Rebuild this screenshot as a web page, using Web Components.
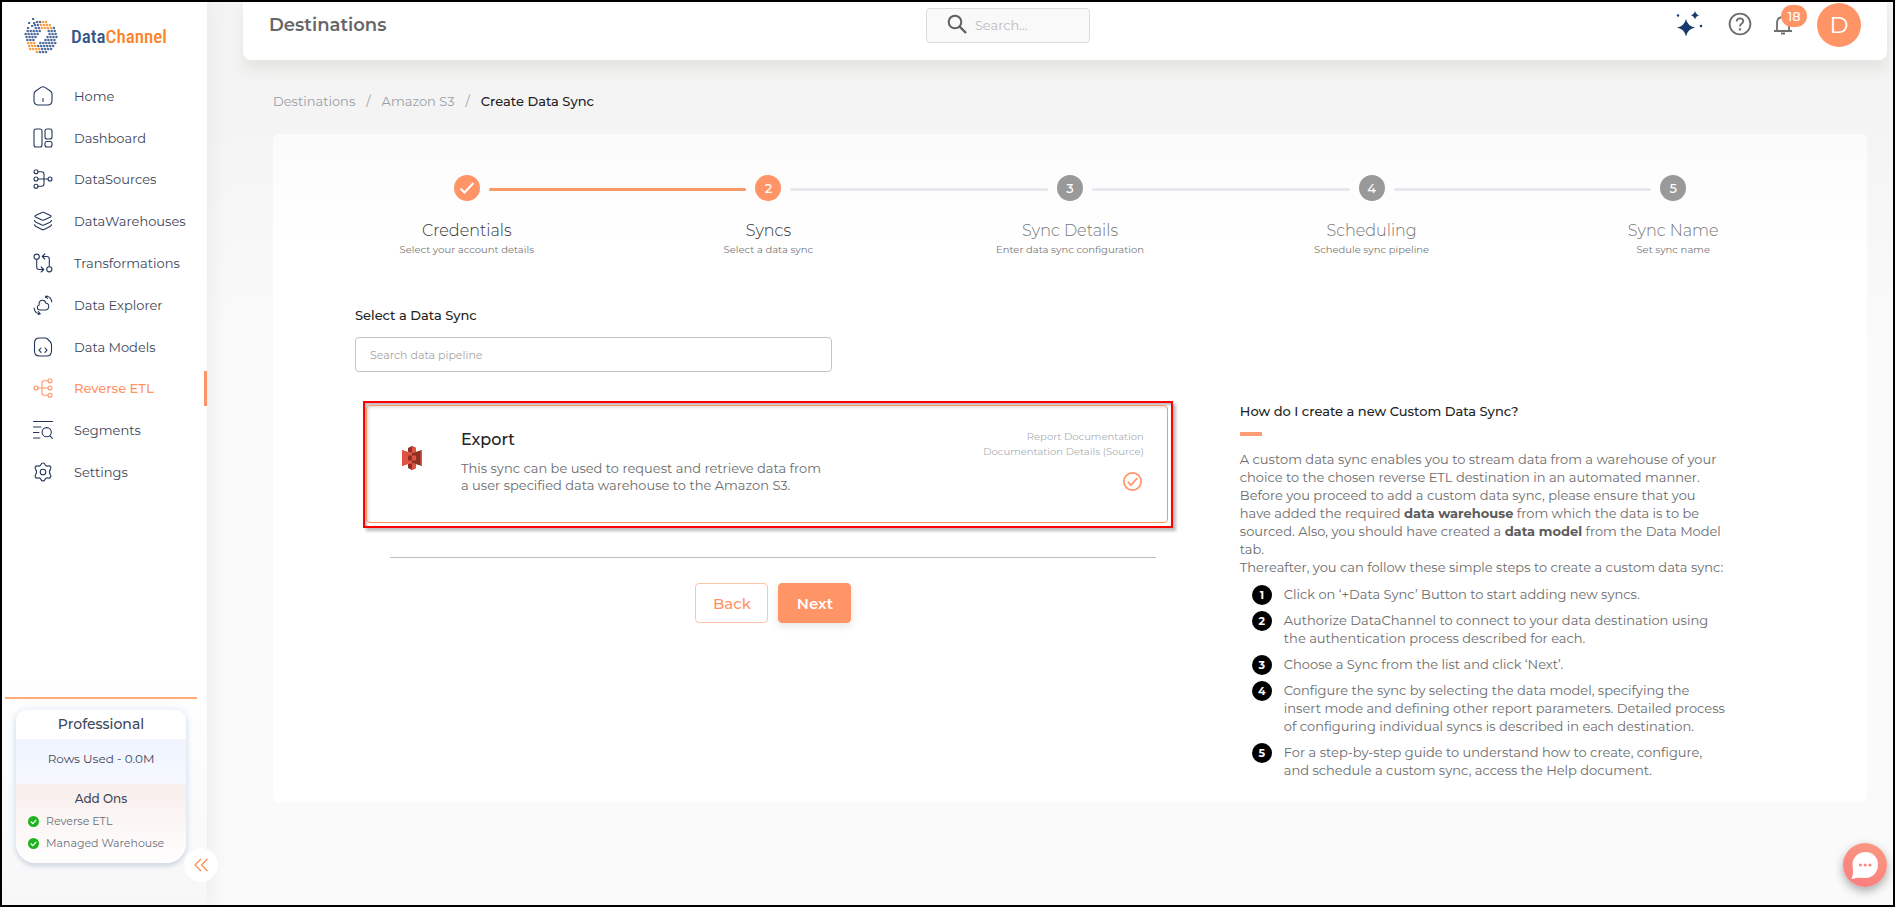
<!DOCTYPE html>
<html lang="en">
<head>
<meta charset="utf-8">
<title>Destinations - DataChannel</title>
<style>
  html { height: 100%; }
  body { margin: 0; min-height: 100%; box-sizing: border-box; border: 2px solid #000; display: flex;
    font-family: Montserrat, Inter, sans-serif; font-size: 13px; background: #fafafa; color: #666; }
  dc-app { flex: 1; }
</style>
</head>
<body>
<dc-app></dc-app>
<script>
const define = (name, html, setup) => customElements.define(name, class extends HTMLElement {
  constructor() {
    super();
    const t = document.createElement('template');
    t.innerHTML = '<style>*{box-sizing:border-box}a{color:inherit;text-decoration:none}button,input{font:inherit}svg{flex:none}</style>' + html;
    this.attachShadow({ mode: 'open' }).append(t.content.cloneNode(true));
  }
  connectedCallback() { if (setup) setup(this, this.shadowRoot); }
});

/* Line icons on a 20 x 20 grid */
const ICONS = {
  home: '<path d="M1 8.2Q1 6.200 2.700 5L8 1.400Q10 .2 12 1.400L17.300 5Q19 6.200 19 8.200V14.500Q19 19 14.500 19H5.500Q1 19 1 14.500ZM10 12.500V15.500"/>',
  dashboard: '<rect x="1" y="1" width="8" height="18" rx="2"/><rect x="12" y="1" width="7" height="10" rx="2"/><rect x="12" y="13.500" width="7" height="5.500" rx="2"/>',
  sources: '<circle cx="3" cy="2.700" r="2"/><circle cx="3" cy="10" r="2"/><circle cx="3" cy="17.300" r="2"/><circle cx="17" cy="10" r="2"/><path d="M5 2.700H8.500Q11 2.700 11 5.200V14.800Q11 17.300 8.500 17.300H5M5 10H15"/>',
  warehouses: '<path d="M9 1.500Q10 1 11 1.500L17.500 4.500Q18.500 5.300 17.500 6L11 9Q10 9.500 9 9L2.500 6Q1.500 5.300 2.500 4.500ZM1.500 9.500Q2 10.700 3 11.200L9 14Q10 14.500 11 14L17 11.200Q18 10.700 18.500 9.500M1.500 13.800Q2 15 3 15.500L9 18.400Q10 18.900 11 18.400L17 15.500Q18 15 18.500 13.800"/>',
  transformations: '<circle cx="3.700" cy="3.700" r="2.600"/><circle cx="16.300" cy="16.300" r="2.600"/><path d="M3.700 6.500V14Q3.700 16.500 6.200 16.500H10.500M8.200 14L10.700 16.500L8.200 19M16.300 13.500V6Q16.300 3.500 13.800 3.500H9.500M11.800 1L9.300 3.500L11.800 6"/>',
  explorer: '<path d="M7 15Q4.300 14.800 4.300 12.500Q4.300 10.300 6.200 10Q5.500 5.300 9.500 5.300Q12.300 5.300 13 8.300Q16 8.500 15.700 11.800Q15.300 14.800 13 15ZM12.500 2.500L14.500 1M12.500 1.200Q18 1 18.800 7M12.500 1.200L14.500 3.500M1 13Q1.800 18.700 7.300 18.800M5.300 16.700L7.300 18.800L5.300 19.500"/>',
  models: '<path d="M6.500 1H12Q13.500 1 14.500 2L17 4.500Q18.500 6 18.500 8V14Q18.500 19 13.500 19H6.500Q1.500 19 1.500 14V6Q1.500 1 6.500 1ZM8 11L6 13.200L8 15.400M12 11L14 13.200L12 15.400"/>',
  reverse: '<circle cx="17" cy="2.700" r="2"/><circle cx="17" cy="10" r="2"/><circle cx="17" cy="17.300" r="2"/><circle cx="3" cy="10" r="2"/><path d="M15 2.700H11.500Q9 2.700 9 5.200V14.800Q9 17.300 11.500 17.300H15M5 10H15"/>',
  segments: '<path d="M.5 1.500H19.500M.5 7H8M.5 12.500H6M.5 18H7M17 15.800L19.300 18.300"/><circle cx="13.700" cy="12.200" r="4.600"/>',
  settings: '<circle cx="10" cy="10" r="2.800"/><path d="M8 2.500C8.700.5 11.300.5 12 2.500C12.600 4 13.700 4.400 15.200 4C17.300 3.500 18.800 5.700 17.300 7.400C16.200 9 16.200 11 17.300 12.600C18.800 14.300 17.300 16.500 15.200 16C13.700 15.600 12.600 16 12 17.500C11.300 19.500 8.700 19.500 8 17.500C7.400 16 6.300 15.600 4.800 16C2.700 16.500 1.200 14.300 2.700 12.600C3.800 11 3.800 9 2.700 7.400C1.200 5.700 2.700 3.500 4.800 4C6.300 4.400 7.400 4 8 2.500Z"/>'
};

define('dc-logo', `
<style>
  :host { display: block; }
  a { display: flex; align-items: center; gap: 11px; font: 500 19px "Roboto Condensed", Roboto, sans-serif; color: #34558b; }
  span span { color: #fb8429; }
</style>
<a href="#"><svg width="36" height="38" viewBox="0 0 36 38"></svg><span>Data<span>Channel</span></span></a>`,
(el, root) => {
  /* Globe of tilted tiles with a light band across its middle */
  let out = '';
  for (let r = 0; r < 11; r++) for (let c = -3; c < 12; c++) {
    const x = 2 + c * 3 + r * .9 - 4, y = 5 + r * 3;
    const dx = x - 17, dy = y - 20, d = Math.hypot(dx, dy);
    const u = (dx + dy) / 1.41, v = (dx - dy) / 1.41;
    if (d > 16.5 || (Math.abs(u) < 3.200 && Math.abs(v) < 8.500) || (dx < -7 && dy < -7)) continue;
    const orange = (dx > -1 && dy < -8 && dx < 12) || (dx < -1 && dy > 5 && v < -9);
    out += `<rect x="${x - 1.2}" y="${y - 1.1}" width="2.400" height="2.200" rx=".6" transform="rotate(28 ${x} ${y})" fill="${orange ? '#fb9a3c' : '#4d6a9a'}"/>`;
  }
  for (const [x, y] of [[4, 5], [8, 1], [9, 5], [3, 10], [7, 8]])
    out += `<rect x="${x}" y="${y}" width="2.200" height="2" fill="#4d6a9a"/>`;
  root.querySelector('svg').innerHTML = out;
});

define('dc-nav-item', `
<style>
  :host { display: block; }
  a { display: flex; align-items: center; height: 100%; padding-left: 31px; color: #3d465a; font-size: 13px; }
  svg { margin-right: 21px; fill: none; stroke: #24375a; stroke-width: 1.1; stroke-linecap: round; stroke-linejoin: round; }
  i { margin-left: auto; width: 3px; height: 35px; }
  :host([active]) a { color: #ff9466; font-weight: 500; }
  :host([active]) svg { stroke: #ff9466; }
  :host([active]) i { background: #ff9466; }
</style>
<a href="#"><svg width="20" height="20" viewBox="0 0 20 20"></svg><slot></slot><i></i></a>`,
(el, root) => { root.querySelector('svg').innerHTML = ICONS[el.getAttribute('icon')]; });

define('dc-plan', `
<style>
  :host { display: block; border-radius: 10px 10px 20px 20px; overflow: hidden; text-align: center; color: #3d465a;
    background: #fff; box-shadow: 0 0 10px #dcebf8, 0 3px 4px #d0d0d6; }
  h2 { margin: 0; font-size: 14px; font-weight: 500; line-height: 29px; }
  p { margin: 0; height: 45px; line-height: 40px; font-size: 12px; background: linear-gradient(#eff4ff, #f6f9ff); }
  section { background: linear-gradient(#f8eeeb, #fff); padding: 5px 12px 9px; }
  h3 { margin: 0; font-size: 12px; font-weight: 500; line-height: 20px; }
  ul { margin: 1px 0 0; padding: 0; list-style: none; text-align: left; font-size: 11px; color: #6a707c; }
  li { display: flex; align-items: center; gap: 7px; height: 22px; white-space: nowrap; }
</style>
<h2>Professional</h2>
<p>Rows Used - 0.0M</p>
<section><h3>Add Ons</h3>
<ul>
  <li><svg width="11" height="11" viewBox="0 0 12 12"><circle cx="6" cy="6" r="6" fill="#1eb41e"/><path d="M3 6L5.200 8.300L9 4.200" fill="none" stroke="#fff" stroke-width="1.300"/></svg>Reverse ETL</li>
  <li><svg width="11" height="11" viewBox="0 0 12 12"><circle cx="6" cy="6" r="6" fill="#1eb41e"/><path d="M3 6L5.200 8.300L9 4.200" fill="none" stroke="#fff" stroke-width="1.300"/></svg>Managed Warehouse</li>
</ul></section>`);

define('dc-sidebar', `
<style>
  :host { display: flex; flex-direction: column; position: relative; background: linear-gradient(#fff 75%, #f7f7f8); box-shadow: 0 0 20px #e6e6e6; }
  dc-logo { margin: 15px 0 20px 22px; }
  nav { display: grid; grid-template-columns: minmax(0, 1fr); grid-auto-rows: 1fr; height: 418px; }
  hr { margin: auto 10px 11px 3px; border: 0; height: 2px; background: #ffac76; }
  dc-plan { margin: 0 21px 42px 14px; }
  button { position: absolute; right: -11px; bottom: 23px; width: 34px; height: 34px; border: 0; border-radius: 50%; background: #fff; padding: 0; display: grid; place-items: center; }
</style>
<dc-logo></dc-logo>
<nav>
  <dc-nav-item icon="home">Home</dc-nav-item>
  <dc-nav-item icon="dashboard">Dashboard</dc-nav-item>
  <dc-nav-item icon="sources">DataSources</dc-nav-item>
  <dc-nav-item icon="warehouses">DataWarehouses</dc-nav-item>
  <dc-nav-item icon="transformations">Transformations</dc-nav-item>
  <dc-nav-item icon="explorer">Data Explorer</dc-nav-item>
  <dc-nav-item icon="models">Data Models</dc-nav-item>
  <dc-nav-item icon="reverse" active>Reverse ETL</dc-nav-item>
  <dc-nav-item icon="segments">Segments</dc-nav-item>
  <dc-nav-item icon="settings">Settings</dc-nav-item>
</nav>
<hr>
<dc-plan></dc-plan>
<button aria-label="Collapse menu"><svg width="14" height="14" viewBox="0 0 14 14" fill="none" stroke="#fb8b4a" stroke-width="1.200"><path d="M7 1L1 7L7 13M13.500 1L7.500 7L13.500 13"/></svg></button>`);

define('dc-header', `
<style>
  :host { display: grid; grid-template-columns: 46fr auto 54fr; align-items: center; height: 58px; padding: 0 26px 12px; background: #fff;
    border-radius: 0 0 8px 8px; box-shadow: 0 10px 14px #e5e4e1; }
  h1 { margin: 0; font-size: 18px; font-weight: 600; color: #666; }
  label { display: flex; align-items: center; width: 164px; height: 35px; padding-left: 18px; gap: 6px; background: #f9f9f9; border: 1px solid #dcdcdc; border-radius: 4px; }
  input { flex: 1; min-width: 0; border: 0; padding: 0; background: none; font-size: 13px; outline: 0; }
  input::placeholder { color: #bcbcbc; opacity: 1; }
  div { display: flex; align-items: center; justify-content: flex-end; }
  button { border: 0; padding: 0; background: none; display: block; }
  .help { margin-left: 25px; }
  .bell { position: relative; margin: 0 19px 0 21px; }
  .bell span { position: absolute; left: 8px; top: -8px; width: 26px; height: 22px; line-height: 22px; border-radius: 11px; background: #ff9466; color: #fff; font-size: 13px; font-weight: 500; }
  .user { width: 44px; height: 44px; border-radius: 50%; background: #ff9466; color: #fff; font-size: 23px; margin-left: 5px; }
</style>
<h1>Destinations</h1>
<label><svg width="24" height="24" viewBox="0 0 24 24" fill="none" stroke="#606060" stroke-width="2"><circle cx="10" cy="9" r="6.300"/><path d="M14.500 13.500L21 20" stroke-width="2.400"/></svg><input type="search" placeholder="Search..." aria-label="Search"></label>
<div>
  <button aria-label="Assistant"><svg width="28" height="28" viewBox="0 0 28 28" fill="#163a6b"><path d="M11 9Q12.500 16 20 17.500Q12.500 19 11 26.500Q9.500 19 2 17.500Q9.500 16 11 9ZM20 1Q20.800 4.500 24.300 5.200Q20.800 6 20 9.500Q19.200 6 15.700 5.200Q19.200 4.500 20 1Z"/><circle cx="3" cy="5.500" r="1.200"/><circle cx="26" cy="16" r="1.300"/></svg></button>
  <button class="help" aria-label="Help"><svg width="24" height="24" viewBox="0 0 24 24" fill="none" stroke="#6f6f6f" stroke-width="1.900"><circle cx="12" cy="12" r="10.400"/><path d="M8.700 9.500Q8.900 6.400 12 6.400Q15.200 6.500 15.200 9.300Q15.200 10.700 13.500 11.800Q12 12.800 12 14.600"/><path d="M12 16.300V18.500" stroke-width="2.200"/></svg></button>
  <button class="bell" aria-label="Notifications"><svg width="20" height="22" viewBox="0 0 20 22" fill="none" stroke="#6f6f6f" stroke-width="1.800"><path d="M1 18H19M4 18V9.500Q4.500 4 10 4Q15.500 4 16 9.500V18"/><path d="M8 20.500H12" stroke-width="2"/></svg><span>18</span></button>
  <button class="user" aria-label="Account">D</button>
</div>`);

define('dc-step', `
<style>
  :host { display: flex; flex-direction: column; align-items: center; position: relative; color: #777; }
  b { width: 26px; height: 26px; border-radius: 50%; background: #999; color: #fff; font-size: 13px; font-weight: 500; line-height: 26px; text-align: center; }
  i { position: absolute; left: calc(50% + 22px); width: calc(100% - 44px); top: 13px; height: 3px; border-radius: 2px; background: #e8e8ef; }
  strong { margin-top: 20px; font-size: 16px; font-weight: 300; line-height: 20px; }
  small { margin-top: 3px; font-size: 10px; line-height: 12px; color: #777; }
  svg { display: block; margin: 5px; }
  :host([state]) b { background: #ff9466; }
  :host([state]) strong { color: #333; }
  :host([state=done]) i { background: #fb9767; }
  :host([last]) i { display: none; }
</style>
<b></b><i></i><strong><slot></slot></strong><small><slot name="note"></slot></small>`,
(el, root) => {
  root.querySelector('b').innerHTML = el.getAttribute('state') === 'done'
    ? '<svg width="16" height="16" viewBox="0 0 16 16" fill="none" stroke="#fff" stroke-width="2"><path d="M1.500 8.500L5.500 12.500L14.500 3"/></svg>'
    : el.getAttribute('number');
});

define('dc-sync-card', `
<style>
  :host { display: block; border: 2px solid #f00; padding: 2px 3px 3px 1px; box-shadow: 3px 3px 3px #bbb, inset 2px 2px 2px #bbb; }
  article { display: flex; height: 118px; border: 1px solid #ff9466; border-radius: 4px; padding: 23px 23px 0 35px; box-shadow: inset 2px 2px 3px #e4e4e4; }
  .logo { margin-top: 17px; }
  .text { margin: 1px 0 0 39px; flex: 1; }
  h3 { margin: 0 0 10px; font-size: 16px; font-weight: 500; line-height: 20px; color: #222; }
  p { margin: 0; font-size: 13px; line-height: 17px; color: #6c6c6c; }
  aside { display: flex; flex-direction: column; align-items: flex-end; font-size: 10px; line-height: 15px; color: #a9afb5; }
  aside svg { margin: 13px 2px 0 0; }
</style>
<article>
  <svg class="logo" width="20" height="24" viewBox="0 0 20 24"><path d="M0 4L3 5.500V18.500L0 20Z" fill="#8c3123"/><path d="M0 4L10 7V17L0 20Z" fill="#e05243"/><path d="M20 4L10 7V17L20 20Z" fill="#8c3123"/><path d="M18.500 4.500L20 4V20L18.500 19.500Z" fill="#e05243"/><path d="M6 2L10 0L14 2V6L10 7L6 6ZM6 18L10 17L14 18V22L10 24L6 22Z" fill="#8c3123"/><path d="M10 0L14 2V6L10 7ZM10 17L14 18V22L10 24Z" fill="#e05243"/><path d="M6 9.500H10V14.500H6Z" fill="#8c3123"/><path d="M10 9.500H14V14.500H10Z" fill="#e05243"/></svg>
  <div class="text"><h3>Export</h3><p>This sync can be used to request and retrieve data from<br>a user specified data warehouse to the Amazon S3.</p></div>
  <aside><a href="#">Report Documentation</a><a href="#">Documentation Details (Source)</a>
  <svg width="19" height="19" viewBox="0 0 19 19" fill="none" stroke="#ff9466" stroke-width="1.700"><circle cx="9.500" cy="9.500" r="8.600"/><path d="M4.800 9.800L8 13L14.300 6.200"/></svg></aside>
</article>`);

define('dc-help', `
<style>
  :host { display: block; font-size: 13px; line-height: 18px; color: #6c6c6c; white-space: nowrap; }
  h2 { margin: 0; font-size: 13px; font-weight: 500; line-height: 18px; color: #222; }
  hr { margin: 12px 0 14px; width: 22px; height: 4px; border: 0; background: #ff9e74; }
  p { margin: 0; }
  b { font-weight: 700; color: #5c5c5c; }
  ol { list-style: none; margin: 9px 0 0; padding: 0 0 1px 12px; counter-reset: n; display: flex; flex-direction: column; gap: 8px; }
  li { display: flex; gap: 12px; counter-increment: n; }
  li::before { content: counter(n); flex: none; width: 20px; height: 20px; margin: 0 0 -2px; border-radius: 50%; background: #000; color: #fff; font-size: 11px; font-weight: 700; line-height: 20px; text-align: center; }
</style>
<h2>How do I create a new Custom Data Sync?</h2>
<hr>
<p>A custom data sync enables you to stream data from a warehouse of your<br>choice to the chosen reverse ETL destination in an automated manner.<br>Before you proceed to add a custom data sync, please ensure that you<br>have added the required <b>data warehouse</b> from which the data is to be<br>sourced. Also, you should have created a <b>data model</b> from the Data Model<br>tab.</p>
<p>Thereafter, you can follow these simple steps to create a custom data sync:</p>
<ol>
  <li><span>Click on ‘+Data Sync’ Button to start adding new syncs.</span></li>
  <li><span>Authorize DataChannel to connect to your data destination using<br>the authentication process described for each.</span></li>
  <li><span>Choose a Sync from the list and click ‘Next’.</span></li>
  <li><span>Configure the sync by selecting the data model, specifying the<br>insert mode and defining other report parameters. Detailed process<br>of configuring individual syncs is described in each destination.</span></li>
  <li><span>For a step-by-step guide to understand how to create, configure,<br>and schedule a custom sync, access the Help document.</span></li>
</ol>`);

define('dc-wizard', `
<style>
  :host { display: block; background: linear-gradient(#fbfbfb, #fff 110px); border-radius: 5px; padding: 41px 43px 22px; }
  .steps { display: grid; grid-template-columns: repeat(5, 1fr); }
  .body { display: grid; grid-template-columns: 7fr 5fr; column-gap: 67px; margin: 49px 0 0 39px; }
  .pick { display: flex; flex-direction: column; }
  label { font-size: 13px; font-weight: 500; line-height: 20px; color: #222; }
  input { margin-top: 12px; width: 477px; height: 35px; border: 1px solid #c4c4c4; border-radius: 4px; padding: 0 14px; font-size: 11px; background: #fff; }
  input::placeholder { color: #a5a5a5; opacity: 1; }
  dc-sync-card { margin: 29px 0 0 8px; }
  hr { margin: 29px 17px 0 35px; border: 0; height: 1px; background: #bdbdbd; }
  .actions { display: flex; justify-content: center; gap: 10px; margin: 25px 0 0 19px; }
  button { height: 40px; width: 73px; border: 1px solid #ff9466; border-radius: 4px; background: #fff; color: #ff9466; font-size: 15px; font-weight: 500; padding: 0; }
  .back { border-color: #ffc3a8; }
  .next { background: #ff9466; color: #fff; box-shadow: 0 3px 8px #e4e4e4; font-weight: 600; }
  dc-help { margin-top: 97px; }
</style>
<div class="steps">
  <dc-step number="1" state="done">Credentials<span slot="note">Select your account details</span></dc-step>
  <dc-step number="2" state="current">Syncs<span slot="note">Select a data sync</span></dc-step>
  <dc-step number="3">Sync Details<span slot="note">Enter data sync configuration</span></dc-step>
  <dc-step number="4">Scheduling<span slot="note">Schedule sync pipeline</span></dc-step>
  <dc-step number="5" last>Sync Name<span slot="note">Set sync name</span></dc-step>
</div>
<div class="body">
  <div class="pick">
    <label for="q">Select a Data Sync</label>
    <input id="q" type="text" placeholder="Search data pipeline">
    <dc-sync-card></dc-sync-card>
    <hr>
    <div class="actions"><button class="back">Back</button><button class="next">Next</button></div>
  </div>
  <dc-help></dc-help>
</div>`);

define('dc-app', `
<style>
  :host { display: grid; grid-template-columns: 205px minmax(0, 1fr); position: relative; }
  main { padding: 0 6px 0 36px; background: linear-gradient(#f4f4f4 120px, #fafafa 330px); }
  .crumbs { display: flex; gap: 11px; margin: 31px 0 23px 30px; font-size: 13px; line-height: 20px; color: #999fa5; }
  .crumbs b { font-weight: 500; color: #222; }
  dc-wizard { margin: 0 20px 0 30px; }
  .chat { position: absolute; right: 6px; bottom: 18px; width: 44px; height: 44px; padding: 0; border: 0; border-radius: 50%; display: grid; place-items: center;
    background: linear-gradient(20deg, #fb7c80, #fa9a80); box-shadow: 0 4px 10px #aaa; }
</style>
<dc-sidebar></dc-sidebar>
<main>
  <dc-header></dc-header>
  <nav class="crumbs" aria-label="Breadcrumb"><a href="#">Destinations</a><span>/</span><a href="#">Amazon S3</a><span>/</span><b>Create Data Sync</b></nav>
  <dc-wizard></dc-wizard>
</main>
<button class="chat" aria-label="Chat"><svg width="28" height="28" viewBox="0 0 28 28"><path d="M14.500 1C22 1 27 6.500 27 13.500C27 21 22 27 14 27Q9.500 26.500 6 26.800Q3 27.500.5 28Q2 24 2.200 20Q1.500 17 1.500 13.500C1.500 6.500 7 1 14.500 1Z" fill="#fff"/><g fill="#fa8a80"><circle cx="9.500" cy="14" r="1.600"/><circle cx="14.200" cy="14" r="1.600"/><circle cx="19" cy="14" r="1.600"/></g></svg></button>`);
</script>
</body>
</html>
